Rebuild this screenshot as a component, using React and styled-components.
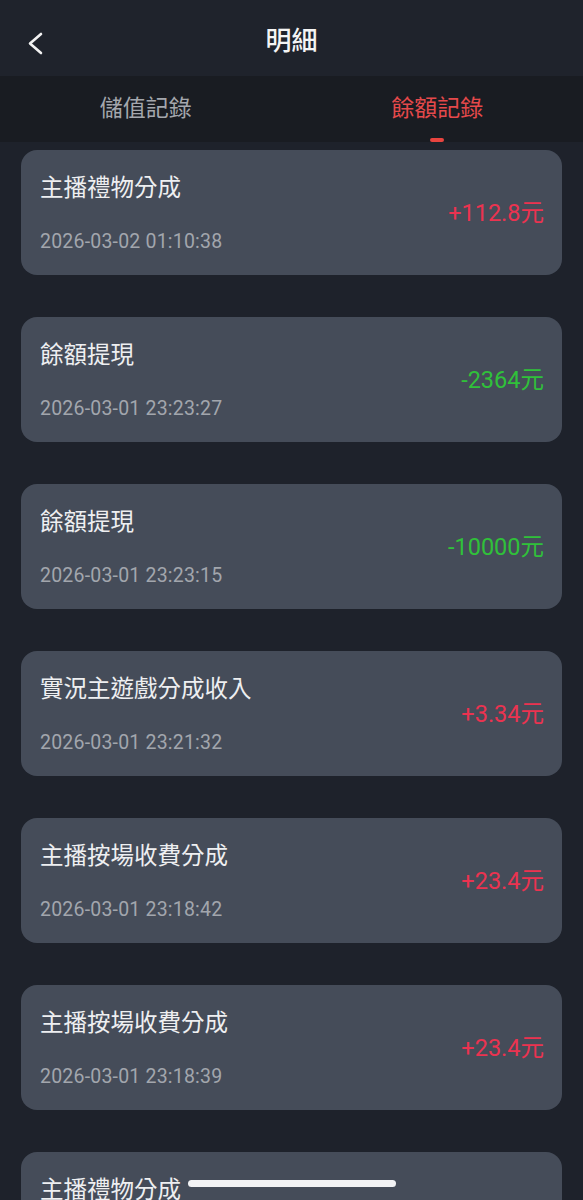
import styled, { createGlobalStyle } from "styled-components";

const records = [
    { title: "主播禮物分成", date: "2026-03-02 01:10:38", amount: "+112.8元", income: true },
    { title: "餘額提現", date: "2026-03-01 23:23:27", amount: "-2364元", income: false },
    { title: "餘額提現", date: "2026-03-01 23:23:15", amount: "-10000元", income: false },
    { title: "實況主遊戲分成收入", date: "2026-03-01 23:21:32", amount: "+3.34元", income: true },
    { title: "主播按場收費分成", date: "2026-03-01 23:18:42", amount: "+23.4元", income: true },
    { title: "主播按場收費分成", date: "2026-03-01 23:18:39", amount: "+23.4元", income: true },
    { title: "主播禮物分成", date: "2026-03-01 23:10:02", amount: "+56.2元", income: true },
];

export default function App() {
    return (
        <>
            <GlobalStyle />
            <Page>
                <Header>
                    <Back>
                        <svg width="22" height="26" viewBox="0 0 22 26" fill="none">
                            <path d="M17 4 L6 13.5 L17 23" stroke="#f2f2f2" strokeWidth="2.6" strokeLinecap="round" strokeLinejoin="round" />
                        </svg>
                    </Back>
                    <Title>明細</Title>
                </Header>
                <Tabs>
                    <Tab>儲值記錄</Tab>
                    <Tab active>餘額記錄</Tab>
                </Tabs>
                <List>
                    {records.map((r, i) => (
                        <Card key={i}>
                            <Info>
                                <Name>{r.title}</Name>
                                <Time>{r.date}</Time>
                            </Info>
                            <Amount income={r.income}>{r.amount}</Amount>
                        </Card>
                    ))}
                </List>
                <HomeBar />
            </Page>
        </>
    );
}

const GlobalStyle = createGlobalStyle`
    html, body {
        margin: 0;
        padding: 0;
        background: #1e222b;
    }
    body {
        font-family: Roboto, "Noto Sans CJK TC", sans-serif;
    }
`
const Page = styled.div`
    width: 583px;
    height: 1200px;
    overflow: hidden;
    background: #1e222b;
    position: relative;
`
const Header = styled.div`
    height: 76px;
    display: flex;
    align-items: center;
    justify-content: center;
    position: relative;
    background: #1f232c;
`
const Back = styled.div`
    position: absolute;
    left: 24px;
    top: 30px;
    display: flex;
`
const Title = styled.h1`
    margin: 0;
    font-size: 26px;
    font-weight: 500;
    color: #f4f4f4;
    font-family: "Noto Sans CJK TC", sans-serif;
`
const Tabs = styled.div`
    height: 66px;
    display: flex;
    background: #191c22;
`
const Tab = styled.div`
    flex: 1;
    display: flex;
    justify-content: center;
    padding-top: 13px;
    font-size: 23px;
    font-family: "Noto Sans CJK TC", sans-serif;
    color: ${p => p.active ? "#e5494b" : "#a4a7ad"};
    position: relative;

    &::after {
        content: "";
        display: ${p => p.active ? "block" : "none"};
        position: absolute;
        bottom: 0;
        left: 50%;
        transform: translateX(-50%);
        width: 14px;
        height: 4px;
        border-radius: 2px;
        background: #e8443f;
    }
`
const List = styled.div`
    display: flex;
    flex-direction: column;
    gap: 42px;
    padding: 8px 21px 0;
`
const Card = styled.div`
    height: 125px;
    box-sizing: border-box;
    flex-shrink: 0;
    border-radius: 16px;
    background: #454c59;
    display: flex;
    align-items: center;
    justify-content: space-between;
    padding: 0 18px 0 19px;
`
const Info = styled.div`
    display: flex;
    flex-direction: column;
    gap: 29px;
`
const Name = styled.span`
    font-size: 23.5px;
    line-height: 30px;
    color: #eeeff1;
    font-family: "Noto Sans CJK TC", sans-serif;
`
const Time = styled.span`
    font-size: 19.5px;
    line-height: 24px;
    color: #a2a6ad;
    letter-spacing: 0.2px;
`
const Amount = styled.span`
    font-size: 23.5px;
    margin-top: -3px;
    color: ${p => p.income ? "#eb3350" : "#30c13a"};
`
const HomeBar = styled.div`
    position: absolute;
    left: 188px;
    bottom: 13px;
    width: 208px;
    height: 7px;
    border-radius: 4px;
    background: #f2f2f4;
`
